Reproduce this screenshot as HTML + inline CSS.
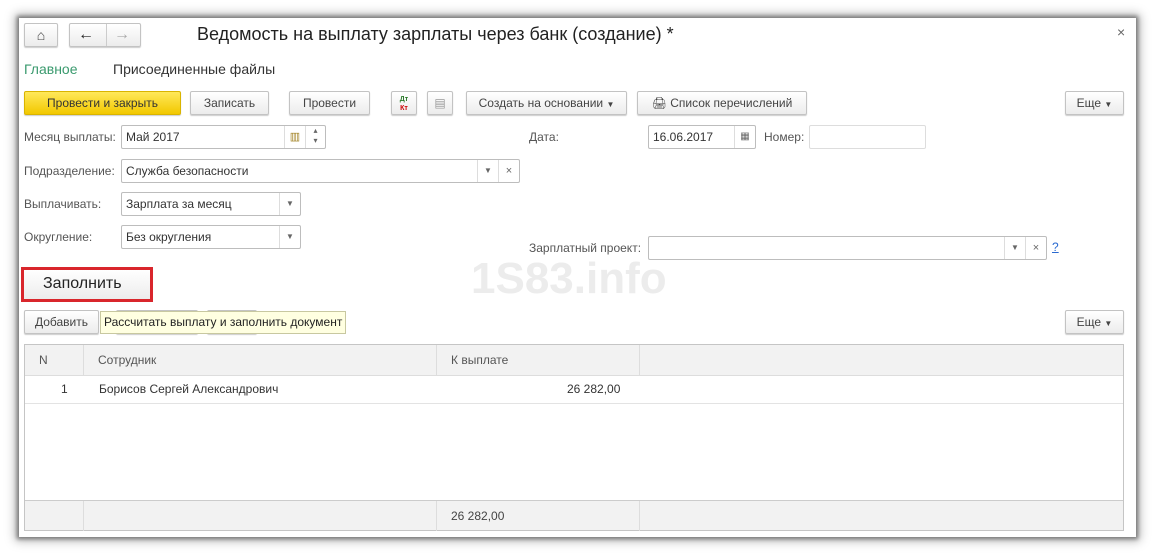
<!DOCTYPE html>
<html><head><meta charset="utf-8"><style>
*{box-sizing:border-box;margin:0;padding:0}
body{width:1155px;height:556px;background:#fff;position:relative;overflow:hidden;font-family:"Liberation Sans",Arial,sans-serif;font-size:12px;color:#333}
.win{position:absolute;left:19px;top:18px;width:1117px;height:519px;background:#fff;box-shadow:0 0 4px 2px #777,0 0 10px 4px #bbb}
.a{position:absolute;white-space:nowrap}
.btn{position:absolute;height:24px;border:1px solid #c3c3c3;border-radius:2px;background:linear-gradient(#fff,#ececec);line-height:22px;text-align:center;color:#444;font-size:12px;box-shadow:0 1px 1px #ccc}
.inp{position:absolute;height:24px;border:1px solid #bdbdbd;border-radius:2px;background:#fff;line-height:22px;padding-left:4px;color:#333}
.lbl{position:absolute;color:#555;line-height:24px}
.dd{position:absolute;top:0;bottom:0;width:21px;border-left:1px solid #ddd;text-align:center;font-size:8px;color:#666;line-height:22px}
.th{position:absolute;top:0;height:31px;line-height:30px;color:#555;padding-left:14px;border-right:1px solid #ddd}
</style></head><body>
<div class="win">
 <div class="btn" style="left:5px;top:5px;width:34px;height:24px;font-size:14px">&#8962;</div>
 <div class="btn" style="left:50px;top:5px;width:72px;height:24px"><span style="position:absolute;left:8px;top:0;font-size:16px;color:#222">&#8592;</span><span style="position:absolute;left:36px;top:0;bottom:0;border-left:1px solid #ccc"></span><span style="position:absolute;left:44px;top:0;font-size:16px;color:#aaa">&#8594;</span></div>
 <div class="a" style="left:178px;top:6px;font-size:18px;color:#222">Ведомость на выплату зарплаты через банк (создание) *</div>
 <div class="a" style="left:1098px;top:6px;font-size:14px;color:#666">×</div>
 <div class="a" style="left:5px;top:43px;font-size:14px;color:#3a9a6e">Главное</div>
 <div class="a" style="left:94px;top:43px;font-size:14px;color:#333">Присоединенные файлы</div>
 <div class="btn" style="left:5px;top:73px;width:157px;background:linear-gradient(#ffe85a,#f2c800);border-color:#d9b400;color:#333">Провести и закрыть</div>
 <div class="btn" style="left:171px;top:73px;width:79px">Записать</div>
 <div class="btn" style="left:270px;top:73px;width:81px">Провести</div>
 <div class="btn" style="left:372px;top:73px;width:26px;font-size:7px;line-height:9px;padding-top:3px;color:#2a7a2a;font-weight:bold">Дт<br><span style="color:#c00">Кт</span></div>
 <div class="btn" style="left:408px;top:73px;width:26px;color:#999">&#9636;</div>
 <div class="btn" style="left:447px;top:73px;width:161px">Создать на основании <span style="font-size:8px">▼</span></div>
 <div class="btn" style="left:618px;top:73px;width:170px">&#128424; Список перечислений</div>
 <div class="btn" style="left:1046px;top:73px;width:59px">Еще <span style="font-size:8px">▼</span></div>

 <div class="lbl" style="left:5px;top:107px">Месяц выплаты:</div>
 <div class="inp" style="left:102px;top:107px;width:205px">Май 2017<div class="dd" style="right:20px;color:#a08020;font-size:11px">▥</div><div class="dd" style="right:0;width:20px;line-height:10px">▴<br>▾</div></div>
 <div class="lbl" style="left:510px;top:107px">Дата:</div>
 <div class="inp" style="left:629px;top:107px;width:108px">16.06.2017<div class="dd" style="right:0;font-size:10px">▦</div></div>
 <div class="lbl" style="left:745px;top:107px">Номер:</div>
 <div class="inp" style="left:790px;top:107px;width:117px;border-color:#ddd"></div>

 <div class="lbl" style="left:5px;top:141px">Подразделение:</div>
 <div class="inp" style="left:102px;top:141px;width:399px">Служба безопасности<div class="dd" style="right:21px">▼</div><div class="dd" style="right:0;font-size:11px">×</div></div>

 <div class="lbl" style="left:5px;top:174px">Выплачивать:</div>
 <div class="inp" style="left:102px;top:174px;width:180px">Зарплата за месяц<div class="dd" style="right:0">▼</div></div>
 <div class="lbl" style="left:5px;top:207px">Округление:</div>
 <div class="inp" style="left:102px;top:207px;width:180px">Без округления<div class="dd" style="right:0">▼</div></div>

 <div class="lbl" style="left:510px;top:218px">Зарплатный проект:</div>
 <div class="inp" style="left:629px;top:218px;width:399px">
  <div class="dd" style="right:21px">▼</div><div class="dd" style="right:0;font-size:11px">×</div></div>
 <div class="a" style="left:1033px;top:222px;color:#2a6ad0;text-decoration:underline">?</div>

 <div class="a" style="left:452px;top:236px;font-size:44px;font-weight:bold;color:#ececec">1S83.info</div>

 <div class="a" style="left:2px;top:249px;width:132px;height:35px;border:3px solid #d9262c;background:linear-gradient(#fff,#ececec)"></div>
 <div class="a" style="left:24px;top:257px;font-size:16px;color:#222">Заполнить</div>

 <div class="btn" style="left:5px;top:292px;width:75px">Добавить</div>
 <div class="btn" style="left:97px;top:292px;width:82px"></div>
 <div class="btn" style="left:188px;top:292px;width:50px"></div>
 <div class="a" style="left:81px;top:293px;height:23px;line-height:21px;padding:0 3px;background:#ffffe1;border:1px solid #c8c8a0;color:#222">Рассчитать выплату и заполнить документ</div>
 <div class="btn" style="left:1046px;top:292px;width:59px">Еще <span style="font-size:8px">▼</span></div>

 <div class="a" style="left:5px;top:326px;width:1100px;height:187px;border:1px solid #c5c5c5;background:#fff">
  <div class="a" style="left:0;top:0;width:100%;height:31px;background:#f2f2f2;border-bottom:1px solid #ddd">
   <div class="th" style="left:0;width:59px">N</div>
   <div class="th" style="left:59px;width:353px">Сотрудник</div>
   <div class="th" style="left:412px;width:203px">К выплате</div>
  </div>
  <div class="a" style="left:0;top:31px;width:100%;height:28px;border-bottom:1px solid #e3e3e3;line-height:27px;color:#333">
   <span class="a" style="left:36px">1</span><span class="a" style="left:74px">Борисов Сергей Александрович</span><span class="a" style="left:542px">26 282,00</span></div>
  <div class="a" style="left:0;top:155px;width:100%;height:30px;background:#f2f2f2;border-top:1px solid #ccc">
   <div class="th" style="left:0;width:59px;height:30px"></div>
   <div class="th" style="left:59px;width:353px;height:30px"></div>
   <div class="th" style="left:412px;width:203px;height:30px;color:#444">26 282,00</div>
  </div>
 </div>
</div>
</body></html>
